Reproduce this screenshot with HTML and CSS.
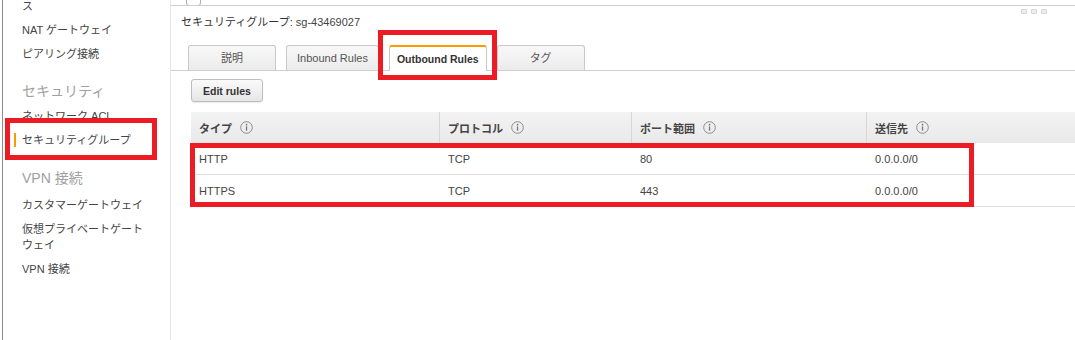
FILE: index.html
```html
<!DOCTYPE html>
<html lang="ja">
<head>
    <meta charset="UTF-8">
    <meta name="viewport" content="width=device-width, initial-scale=1.0">
    <title>セキュリティグループ</title>
    <link rel="stylesheet" href="styles.css">
</head>
<body>
    <div class="page">
        <aside class="sidebar">
            <ul class="nav">
                <li class="nav-item">ス</li>
                <li class="nav-item">NAT ゲートウェイ</li>
                <li class="nav-item">ピアリング接続</li>
                <li class="nav-head">セキュリティ</li>
                <li class="nav-item">ネットワーク ACL</li>
                <li class="nav-item active">セキュリティグループ</li>
                <li class="nav-head">VPN 接続</li>
                <li class="nav-item">カスタマーゲートウェイ</li>
                <li class="nav-item">仮想プライベートゲートウェイ</li>
                <li class="nav-item">VPN 接続</li>
            </ul>
        </aside>

        <main class="main">
            <div class="prev-row">
                <span class="checkbox"></span>
            </div>

            <div class="detail-head">
                <div class="detail-title">セキュリティグループ: <span class="sg-id">sg-43469027</span></div>
                <div class="handle">
                    <span></span><span></span><span></span>
                </div>
            </div>

            <div class="tabs">
                <div class="tab">説明</div>
                <div class="tab">Inbound Rules</div>
                <div class="tab active">Outbound Rules</div>
                <div class="tab">タグ</div>
            </div>

            <button class="btn">Edit rules</button>

            <div class="rules">
                <div class="rules-head">
                    <div class="cell">タイプ <svg class="info" viewBox="0 0 13 13"><circle cx="6.5" cy="6.5" r="5.8"/><rect x="5.9" y="5.4" width="1.3" height="4.2"/><circle class="dot" cx="6.55" cy="3.7" r="0.85"/></svg></div>
                    <div class="cell">プロトコル <svg class="info" viewBox="0 0 13 13"><circle cx="6.5" cy="6.5" r="5.8"/><rect x="5.9" y="5.4" width="1.3" height="4.2"/><circle class="dot" cx="6.55" cy="3.7" r="0.85"/></svg></div>
                    <div class="cell">ポート範囲 <svg class="info" viewBox="0 0 13 13"><circle cx="6.5" cy="6.5" r="5.8"/><rect x="5.9" y="5.4" width="1.3" height="4.2"/><circle class="dot" cx="6.55" cy="3.7" r="0.85"/></svg></div>
                    <div class="cell">送信先 <svg class="info" viewBox="0 0 13 13"><circle cx="6.5" cy="6.5" r="5.8"/><rect x="5.9" y="5.4" width="1.3" height="4.2"/><circle class="dot" cx="6.55" cy="3.7" r="0.85"/></svg></div>
                </div>
                <div class="rules-row">
                    <div class="cell">HTTP</div>
                    <div class="cell">TCP</div>
                    <div class="cell">80</div>
                    <div class="cell">0.0.0.0/0</div>
                </div>
                <div class="rules-row">
                    <div class="cell">HTTPS</div>
                    <div class="cell">TCP</div>
                    <div class="cell">443</div>
                    <div class="cell">0.0.0.0/0</div>
                </div>
            </div>
        </main>

        <!-- 注釈の赤枠 -->
        <span class="mark mark-nav"></span>
        <span class="mark mark-tab"></span>
        <span class="mark mark-rows"></span>
    </div>
</body>
</html>
```

FILE: styles.css
```css
body {
    margin: 0;
    padding: 0;
    font-family: 'Liberation Sans', 'Noto Sans CJK JP', sans-serif;
    font-size: 11px;
    color: #444;
    background: white;
    overflow: hidden;
}

.page {
    position: relative;
    display: flex;
    height: 340px;
}

.sidebar {
    width: 167px;
    margin-left: 2px;
    border-left: 1px solid #8c8c8c;
    border-right: 1px solid #e6e6e6;
    flex-shrink: 0;
    overflow: hidden;
}

.nav {
    list-style: none;
    margin: -6px 0 0;
    padding: 0;
}

.nav-item {
    padding: 4px 22px 4px 19px;
    line-height: 16px;
    color: #444;
}

.nav-item.active {
    padding-left: 11px;
    display: flex;
    align-items: center;
}

.nav-item.active::before {
    content: '';
    width: 2px;
    height: 14px;
    background: #f90;
    margin-right: 6px;
    flex-shrink: 0;
}

.nav-head {
    margin-top: 12px;
    padding-left: 19px;
    line-height: 26px;
    font-size: 14px;
    color: #a0a0a0;
}

.nav-head + .nav-item + .nav-item + .nav-head {
    margin-top: 13px;
    padding-bottom: 2px;
}

.main {
    flex: 1;
    min-width: 0;
}

.prev-row {
    height: 5px;
    overflow: hidden;
    border-bottom: 1px solid #cfcfcf;
    padding-left: 15px;
}

.checkbox {
    display: block;
    width: 13px;
    height: 13px;
    margin-top: -9px;
    border: 1px solid #b0b0b0;
    border-radius: 3px;
}

.detail-head {
    display: flex;
    align-items: flex-start;
    padding: 7px 0 0 10px;
}

.detail-title {
    line-height: 18px;
    color: #333;
}

.sg-id {
    color: #444;
}

.handle {
    display: flex;
    gap: 4px;
    margin: -4px 28px 0 auto;
}

.handle span {
    width: 4px;
    height: 3px;
    border: 1px solid #d6d6d6;
    border-radius: 1px;
    background: #eee;
}

.tabs {
    display: flex;
    align-items: flex-end;
    gap: 10px;
    margin-top: 14px;
    padding-left: 17px;
    border-bottom: 1px solid #cfcfcf;
}

.tab {
    box-sizing: border-box;
    height: 25px;
    min-width: 88px;
    padding: 0 10px;
    line-height: 24px;
    text-align: center;
    color: #555;
    background: linear-gradient(#f8f8f8, #ebebeb);
    border: 1px solid #c9c9c9;
    border-bottom: none;
    border-radius: 3px 3px 0 0;
}

.tab.active {
    height: 26px;
    margin-bottom: -1px;
    padding: 0 7px;
    background: white;
    border-top: 2px solid #f90;
    font-weight: bold;
    font-size: 10.5px;
    color: #333;
    line-height: 25px;
}

.btn {
    display: block;
    box-sizing: border-box;
    height: 23px;
    margin: 8px 0 0 20px;
    padding: 0 11px;
    font-family: inherit;
    font-size: 10.5px;
    font-weight: bold;
    color: #333;
    background: linear-gradient(#fafafa, #e6e6e6);
    border: 1px solid #bdbdbd;
    border-radius: 3px;
    box-shadow: 0 1px 1px rgba(0, 0, 0, 0.08);
}

.rules {
    margin: 10px 0 0 20px;
}

.rules-head,
.rules-row {
    display: grid;
    grid-template-columns: 248px 192px 235px 1fr;
}

.rules-head {
    height: 31px;
    background: linear-gradient(#f3f3f3, #e9e9e9);
    font-weight: bold;
    color: #444;
}

.rules-row {
    height: 31px;
    border-bottom: 1px solid #dcdcdc;
}

.cell {
    display: flex;
    align-items: center;
    gap: 8px;
    padding: 0 8px;
}

.rules-head .cell + .cell {
    border-left: 1px solid #d6d6d6;
}

.rules-row .cell + .cell {
    padding-left: 9px;
}

.info {
    width: 13px;
    height: 13px;
    flex-shrink: 0;
}

.info circle {
    fill: none;
    stroke: #8c8c8c;
    stroke-width: 1;
}

.info rect,
.info .dot {
    fill: #777;
    stroke: none;
}

.mark {
    position: absolute;
    box-sizing: border-box;
    border: 5px solid #ec1c24;
    pointer-events: none;
}

.mark-nav {
    left: 5px;
    top: 118px;
    width: 152px;
    height: 42px;
}

.mark-tab {
    left: 378px;
    top: 30px;
    width: 119px;
    height: 50px;
}

.mark-rows {
    left: 190px;
    top: 143px;
    width: 784px;
    height: 64px;
}
```
